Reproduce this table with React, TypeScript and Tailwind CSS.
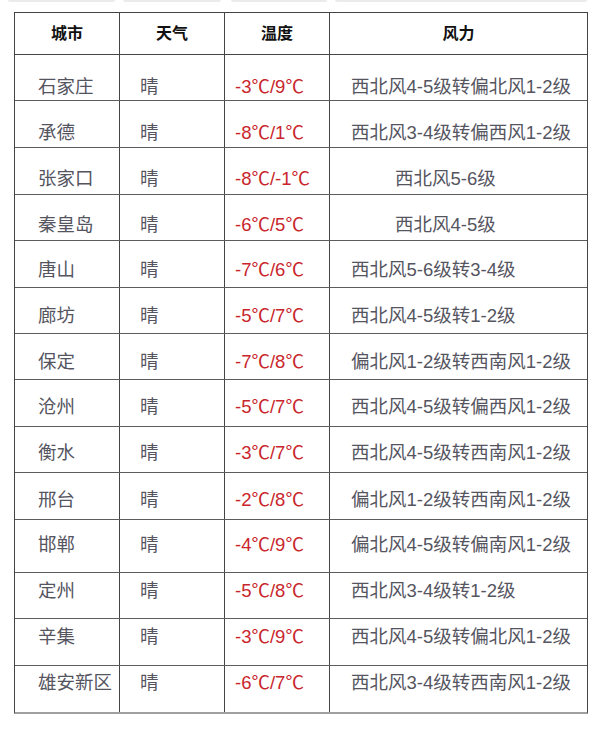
import React from "react";

type Row = { city: string; temp: string; wind: string; h: number; pt: number; indent?: boolean };

const rows: Row[] = [
  { city: "石家庄", temp: "-3℃/9℃", wind: "西北风4-5级转偏北风1-2级", h: 46, pt: 22 },
  { city: "承德", temp: "-8℃/1℃", wind: "西北风3-4级转偏西风1-2级", h: 47, pt: 22 },
  { city: "张家口", temp: "-8℃/-1℃", wind: "西北风5-6级", h: 47, pt: 21, indent: true },
  { city: "秦皇岛", temp: "-6℃/5℃", wind: "西北风4-5级", h: 46, pt: 20, indent: true },
  { city: "唐山", temp: "-7℃/6℃", wind: "西北风5-6级转3-4级", h: 47, pt: 19 },
  { city: "廊坊", temp: "-5℃/7℃", wind: "西北风4-5级转1-2级", h: 46, pt: 18 },
  { city: "保定", temp: "-7℃/8℃", wind: "偏北风1-2级转西南风1-2级", h: 46, pt: 18 },
  { city: "沧州", temp: "-5℃/7℃", wind: "西北风4-5级转偏西风1-2级", h: 47, pt: 17 },
  { city: "衡水", temp: "-3℃/7℃", wind: "西北风4-5级转西南风1-2级", h: 46, pt: 16 },
  { city: "邢台", temp: "-2℃/8℃", wind: "偏北风1-2级转西南风1-2级", h: 47, pt: 17 },
  { city: "邯郸", temp: "-4℃/9℃", wind: "偏北风4-5级转偏南风1-2级", h: 53, pt: 15 },
  { city: "定州", temp: "-5℃/8℃", wind: "西北风3-4级转1-2级", h: 46, pt: 8 },
  { city: "辛集", temp: "-3℃/9℃", wind: "西北风4-5级转偏北风1-2级", h: 47, pt: 8 },
  { city: "雄安新区", temp: "-6℃/7℃", wind: "西北风3-4级转西南风1-2级", h: 47, pt: 7 },
];

function Temp({ t }: { t: string }) {
  const parts = t.split("℃");
  return (
    <>
      {parts.map((p, i) => (
        <React.Fragment key={i}>
          {p}
          {i < parts.length - 1 && (
            <span className="font-['Noto_Sans_CJK_SC',sans-serif] leading-[0]">℃</span>
          )}
        </React.Fragment>
      ))}
    </>
  );
}

export default function App() {
  return (
    <div className="w-[600px] h-[732px] bg-white font-['Liberation_Sans','Noto_Sans_CJK_SC',sans-serif] relative">
      <div className="flex h-[2px] gap-0">
        <div className="ml-[8px] w-[107px] h-[2px] bg-[#ebebeb] rounded-b" />
        <div className="ml-[8px] w-[98px] h-[2px] bg-[#ebebeb] rounded-b" />
        <div className="ml-[10px] w-[96px] h-[2px] bg-[#ebebeb] rounded-b" />
        <div className="ml-[8px] w-[252px] h-[2px] bg-[#ebebeb] rounded-b" />
      </div>
      <div className="ml-[14px] mt-[10px] w-[574px] border-x border-t border-[#444] border-b-2 border-b-[#a0a0a0]">
        <div className="grid grid-cols-[105px_105px_105px_1fr] h-[42px] border-b border-[#444] text-[16px] font-bold text-[#111] leading-[20px]">
          <div className="flex items-center justify-center border-r border-[#444]">城市</div>
          <div className="flex items-center justify-center border-r border-[#444]">天气</div>
          <div className="flex items-center justify-center border-r border-[#444]">温度</div>
          <div className="flex items-center justify-center">风力</div>
        </div>
        {rows.map((r, i) => (
          <div
            key={r.city}
            className={`grid grid-cols-[105px_105px_105px_1fr] text-[18.5px] leading-[20px] ${
              i < rows.length - 1 ? "border-b border-[#5c5c5c]" : ""
            }`}
            style={{ height: i < rows.length - 1 ? r.h : r.h - 1 }}
          >
            <div className="border-r border-[#444] pl-[23px] text-[#55555f] whitespace-nowrap" style={{ paddingTop: r.pt }}>
              {r.city}
            </div>
            <div className="border-r border-[#444] pl-[20px] text-[#55555f]" style={{ paddingTop: r.pt }}>
              晴
            </div>
            <div
              className="border-r border-[#444] pl-[10px] text-[#c9262c] whitespace-nowrap"
              style={{ paddingTop: r.pt }}
            >
              <Temp t={r.temp} />
            </div>
            <div
              className={`${r.indent ? "pl-[65px]" : "pl-[21px]"} text-[#55555f] whitespace-nowrap`}
              style={{ paddingTop: r.pt }}
            >
              {r.wind}
            </div>
          </div>
        ))}
      </div>
    </div>
  );
}
